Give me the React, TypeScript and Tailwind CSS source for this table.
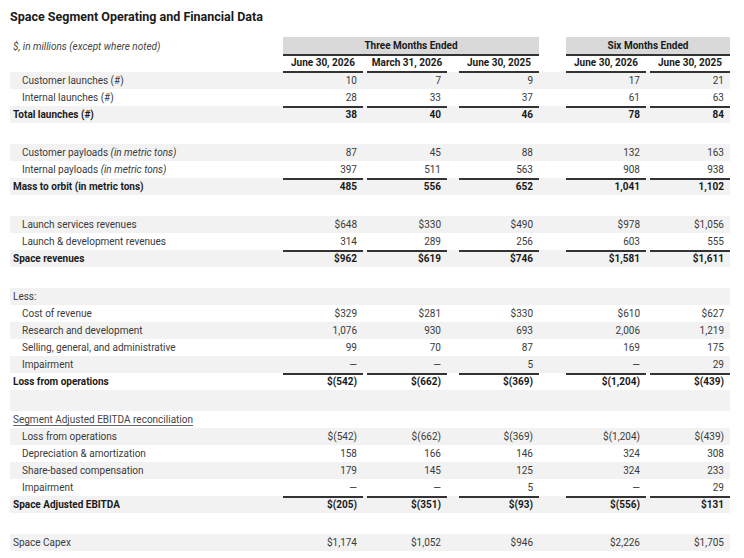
import React from 'react';

type Row =
  | { kind: 'spacer' }
  | {
      kind: 'item' | 'total' | 'head' | 'plain' | 'section';
      label: string;
      note?: string;
      values?: string[];
      ruled?: boolean;
    };

const rows: Row[] = [
  { kind: 'item', label: 'Customer launches (#)', values: ['10', '7', '9', '17', '21'] },
  { kind: 'item', label: 'Internal launches (#)', values: ['28', '33', '37', '61', '63'], ruled: true },
  { kind: 'total', label: 'Total launches (#)', values: ['38', '40', '46', '78', '84'] },
  { kind: 'spacer' },
  { kind: 'item', label: 'Customer payloads', note: '(in metric tons)', values: ['87', '45', '88', '132', '163'] },
  { kind: 'item', label: 'Internal payloads', note: '(in metric tons)', values: ['397', '511', '563', '908', '938'], ruled: true },
  { kind: 'total', label: 'Mass to orbit (in metric tons)', values: ['485', '556', '652', '1,041', '1,102'] },
  { kind: 'spacer' },
  { kind: 'item', label: 'Launch services revenues', values: ['$648', '$330', '$490', '$978', '$1,056'] },
  { kind: 'item', label: 'Launch & development revenues', values: ['314', '289', '256', '603', '555'], ruled: true },
  { kind: 'total', label: 'Space revenues', values: ['$962', '$619', '$746', '$1,581', '$1,611'] },
  { kind: 'spacer' },
  { kind: 'plain', label: 'Less:' },
  { kind: 'item', label: 'Cost of revenue', values: ['$329', '$281', '$330', '$610', '$627'] },
  { kind: 'item', label: 'Research and development', values: ['1,076', '930', '693', '2,006', '1,219'] },
  { kind: 'item', label: 'Selling, general, and administrative', values: ['99', '70', '87', '169', '175'] },
  { kind: 'item', label: 'Impairment', values: ['—', '—', '5', '—', '29'], ruled: true },
  { kind: 'total', label: 'Loss from operations', values: ['$(542)', '$(662)', '$(369)', '$(1,204)', '$(439)'] },
  { kind: 'spacer' },
  { kind: 'section', label: 'Segment Adjusted EBITDA reconciliation' },
  { kind: 'item', label: 'Loss from operations', values: ['$(542)', '$(662)', '$(369)', '$(1,204)', '$(439)'] },
  { kind: 'item', label: 'Depreciation & amortization', values: ['158', '166', '146', '324', '308'] },
  { kind: 'item', label: 'Share-based compensation', values: ['179', '145', '125', '324', '233'] },
  { kind: 'item', label: 'Impairment', values: ['—', '—', '5', '—', '29'], ruled: true },
  { kind: 'total', label: 'Space Adjusted EBITDA', values: ['$(205)', '$(351)', '$(93)', '$(556)', '$131'] },
  { kind: 'spacer' },
  { kind: 'plain', label: 'Space Capex', values: ['$1,174', '$1,052', '$946', '$2,226', '$1,705'] },
];

const GRID = 'grid grid-cols-[273px_80px_84px_92px_107px_84px]';
// left offsets of each value column (gaps between the rules)
const PAD = ['pl-0', 'pl-[4px]', 'pl-[12px]', 'pl-[27px]', 'pl-[4px]'];
const DATES = ['June 30, 2026', 'March 31, 2026', 'June 30, 2025', 'June 30, 2026', 'June 30, 2025'];

const App: React.FC = () => {
  return (
    <div className="w-[744px] h-[558px] bg-white pl-[10px] pt-[8px] font-['Roboto','Liberation_Sans',sans-serif] text-[#3a3a3a]">
      <h1 className="text-[12.5px] leading-[17px] font-bold text-[#1a1a1a]">Space Segment Operating and Financial Data</h1>

      <div className="mt-[12px] w-[720px]">
        {/* period headers */}
        <div className={`${GRID} h-[18px]`}>
          <div className="pl-[3px] text-[10px] italic leading-[19px] text-[#444]">$, in millions (except where noted)</div>
          <div className="col-span-3 bg-[#d9d9d9] border-b-2 border-[#333] text-center text-[10px] font-bold leading-[17px] text-[#1a1a1a]">
            Three Months Ended
          </div>
          <div className="col-span-2 pl-[27px]">
            <div className="h-full bg-[#d9d9d9] border-b-2 border-[#333] text-center text-[10px] font-bold leading-[17px] text-[#1a1a1a]">
              Six Months Ended
            </div>
          </div>
        </div>
        <div className={`${GRID} h-[17px]`}>
          <div />
          {DATES.map((d, i) => (
            <div key={i} className={PAD[i]}>
              <div className="h-full border-b-2 border-[#333] text-center text-[10px] font-bold leading-[16px] text-[#1a1a1a]">{d}</div>
            </div>
          ))}
        </div>

        {/* body */}
        {rows.map((r, idx) => {
          const shaded = idx % 2 === 0 ? 'bg-[#f2f2f2]' : 'bg-white';
          if (r.kind === 'spacer') return <div key={idx} className={`h-[21px] ${shaded}`} />;
          const bold = r.kind === 'total';
          const indent = r.kind === 'item' ? 'pl-[12px]' : 'pl-[3px]';
          return (
            <div key={idx} className={`${GRID} h-[17px] ${shaded} text-[10px] leading-[17px]`}>
              <div
                className={`${indent} ${bold ? 'font-bold text-[#1a1a1a]' : ''} ${
                  r.kind === 'section' ? 'underline underline-offset-2 decoration-[#666] text-[#444]' : ''
                }`}
              >
                {r.label}
                {r.note && <span className="italic"> {r.note}</span>}
              </div>
              {(r.values ?? ['', '', '', '', '']).map((v, i) => (
                <div key={i} className={PAD[i]}>
                  <div
                    className={`h-full pr-[6px] text-right ${r.ruled ? 'border-b-2 border-[#333]' : ''} ${
                      bold ? 'font-bold text-[#1a1a1a]' : ''
                    }`}
                  >
                    {v}
                  </div>
                </div>
              ))}
            </div>
          );
        })}
      </div>
    </div>
  );
};

export default App;
